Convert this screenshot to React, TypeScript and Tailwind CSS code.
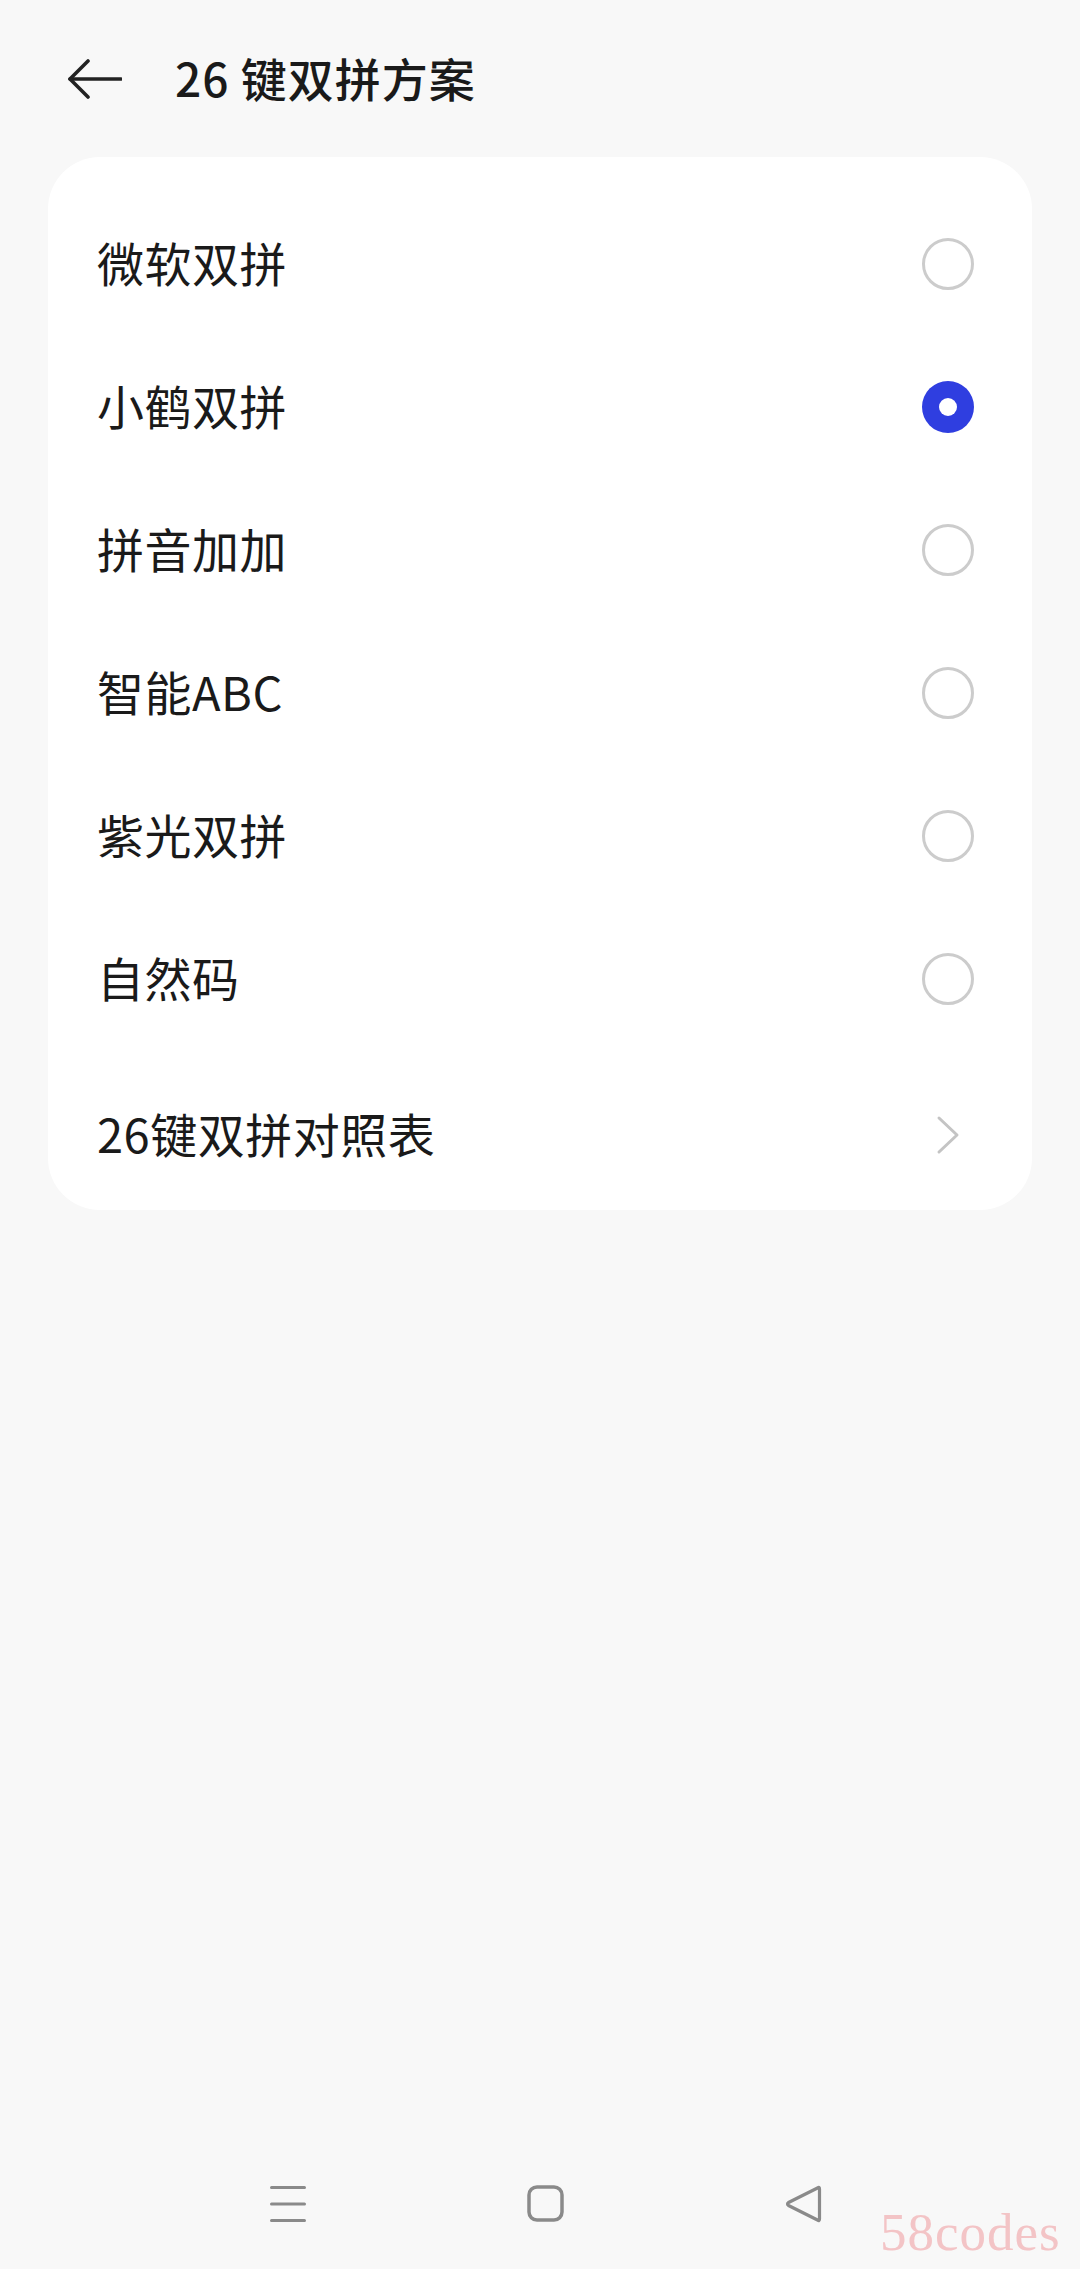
import React from "react";

const options = [
  { label: "微软双拼", selected: false },
  { label: "小鹤双拼", selected: true },
  { label: "拼音加加", selected: false },
  { label: "智能ABC", selected: false },
  { label: "紫光双拼", selected: false },
  { label: "自然码", selected: false },
];

function Radio({ selected }: { selected: boolean }) {
  if (selected) {
    return (
      <div className="w-[52px] h-[52px] rounded-full bg-[#2f3ee0] flex items-center justify-center">
        <div className="w-[18px] h-[18px] rounded-full bg-white" />
      </div>
    );
  }
  return <div className="w-[52px] h-[52px] rounded-full border-[3px] border-[#cccccc] bg-white" />;
}

export default function App() {
  return (
    <div
      className="relative w-[1080px] h-[2269px] bg-[#f8f8f8] flex flex-col text-[#1a1a1a]"
      style={{ fontFamily: '"Noto Sans CJK SC", "Noto Sans", sans-serif' }}
    >
      {/* Header */}
      <div className="h-[157px] flex items-center pl-[68px]">
        <svg width="54" height="40" viewBox="0 0 54 40" fill="none" className="shrink-0">
          <path d="M2 20 H53" stroke="#222" strokeWidth="3.6" strokeLinecap="round" />
          <path d="M20 2 L2 20 L20 38" stroke="#222" strokeWidth="3.6" strokeLinecap="round" strokeLinejoin="round" />
        </svg>
        <div className="ml-[53px] text-[46px] font-medium leading-none -mt-[4px] tracking-[1px]">26 键双拼方案</div>
      </div>

      {/* Card */}
      <div className="mx-[48px] bg-white rounded-[52px] pt-[35px]">
        {options.map((o) => (
          <div key={o.label} className="h-[143px] flex items-center justify-between pl-[49px] pr-[58px]">
            <span className="text-[47px] leading-none -mt-[5px] tracking-[0.5px]">{o.label}</span>
            <Radio selected={o.selected} />
          </div>
        ))}
        <div className="mt-[10px] h-[150px] flex items-center justify-between pl-[49px] pr-[58px]">
          <span className="text-[47px] leading-none -mt-[5px] tracking-[0.5px]">26键双拼对照表</span>
          <div className="w-[52px] flex items-center justify-center">
            <svg width="24" height="40" viewBox="0 0 24 40" fill="none">
              <path d="M3 3 L21 20 L3 37" stroke="#c4c4c4" strokeWidth="3" strokeLinecap="round" strokeLinejoin="round" />
            </svg>
          </div>
        </div>
      </div>

      <div className="flex-1" />

      {/* Nav bar */}
      <div className="h-[130px] flex items-center">
        <div className="absolute left-[270px] bottom-[47px]">
          <svg width="36" height="36" viewBox="0 0 36 36" fill="none">
            <path d="M1.5 1.5 H34.5 M1.5 18 H34.5 M1.5 34.5 H34.5" stroke="#8a8a8a" strokeWidth="3" strokeLinecap="round" />
          </svg>
        </div>
        <div className="absolute left-[527px] bottom-[47px]">
          <svg width="37" height="37" viewBox="0 0 37 37" fill="none">
            <rect x="2" y="2" width="33" height="33" rx="8" stroke="#8a8a8a" strokeWidth="3.5" />
          </svg>
        </div>
        <div className="absolute left-[785px] bottom-[46px]">
          <svg width="38" height="38" viewBox="0 0 38 38" fill="none">
            <path d="M34.5 4 Q34.5 1.5 32.5 3 L3.5 17.5 Q1.5 19 3.5 20.5 L32.5 35 Q34.5 36.5 34.5 34 Z" stroke="#8a8a8a" strokeWidth="3.2" strokeLinejoin="round" />
          </svg>
        </div>
      </div>

      {/* Watermark */}
      <div
        className="absolute left-[880px] top-[2206px] text-[53px] leading-none text-[#f3c4c6] tracking-[1px]"
        style={{ fontFamily: '"Liberation Serif", serif' }}
      >
        58codes
      </div>
    </div>
  );
}
